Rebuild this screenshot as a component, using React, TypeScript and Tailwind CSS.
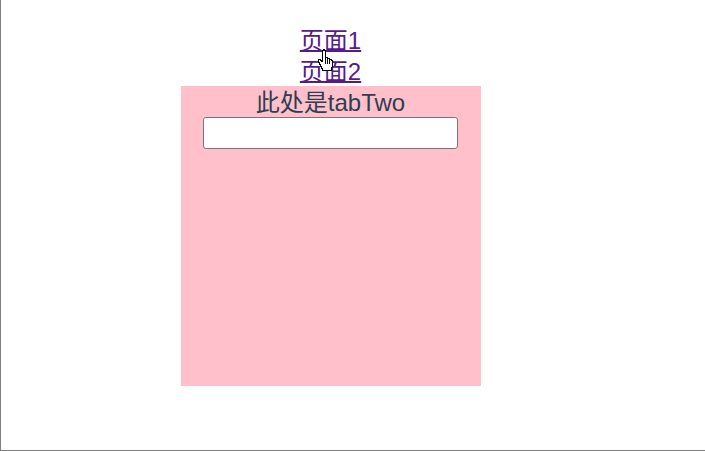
const fontStack = '"Liberation Sans", "Noto Sans CJK SC", sans-serif';

const Cursor = () => (
  <svg className="absolute left-[317px] top-[49px]" width="16" height="24" viewBox="0 0 16 24" shapeRendering="crispEdges">
    <path
      d="M4.5 .5h2v1h1v7h2v1h2v1h2v1h1v7h-1v3h-9v-2h-1v-2h-1v-2h-1v-2h-1v-3h2v1h1v1h1v-11h1v-1z"
      fill="#fff"
      stroke="#000"
      strokeWidth="1"
    />
    <path d="M7.5 9v6M9.5 10v5M11.5 11v4" stroke="#000" strokeWidth="1" />
  </svg>
);

export default function App() {
  return (
    <div
      className="relative h-[451px] w-[705px] overflow-hidden border-b border-l border-[#808080] bg-white text-[24px] leading-[31px]"
      style={{ fontFamily: fontStack }}
    >
      <div className="flex w-[660px] flex-col items-center pt-[25px] text-center">
        <a href="#" className="mr-[1px] block h-[31px] text-[#551a8b] underline decoration-2 underline-offset-[1px]">页面1</a>
        <a href="#" className="mr-[1px] block h-[30px] text-[#551a8b] underline decoration-2 underline-offset-[1px]">页面2</a>
        <div className="flex h-[300px] w-[300px] flex-col items-center bg-[#ffc0cb] text-[#2c3e50]">
          <div className="mr-[1px] h-[31px] pt-[1px]">此处是tabTwo</div>
          <input
            type="text"
            className="mr-[1px] h-[32px] w-[255px] rounded-[3px] border border-[#767676] bg-white"
          />
        </div>
      </div>
      <Cursor />
    </div>
  );
}
